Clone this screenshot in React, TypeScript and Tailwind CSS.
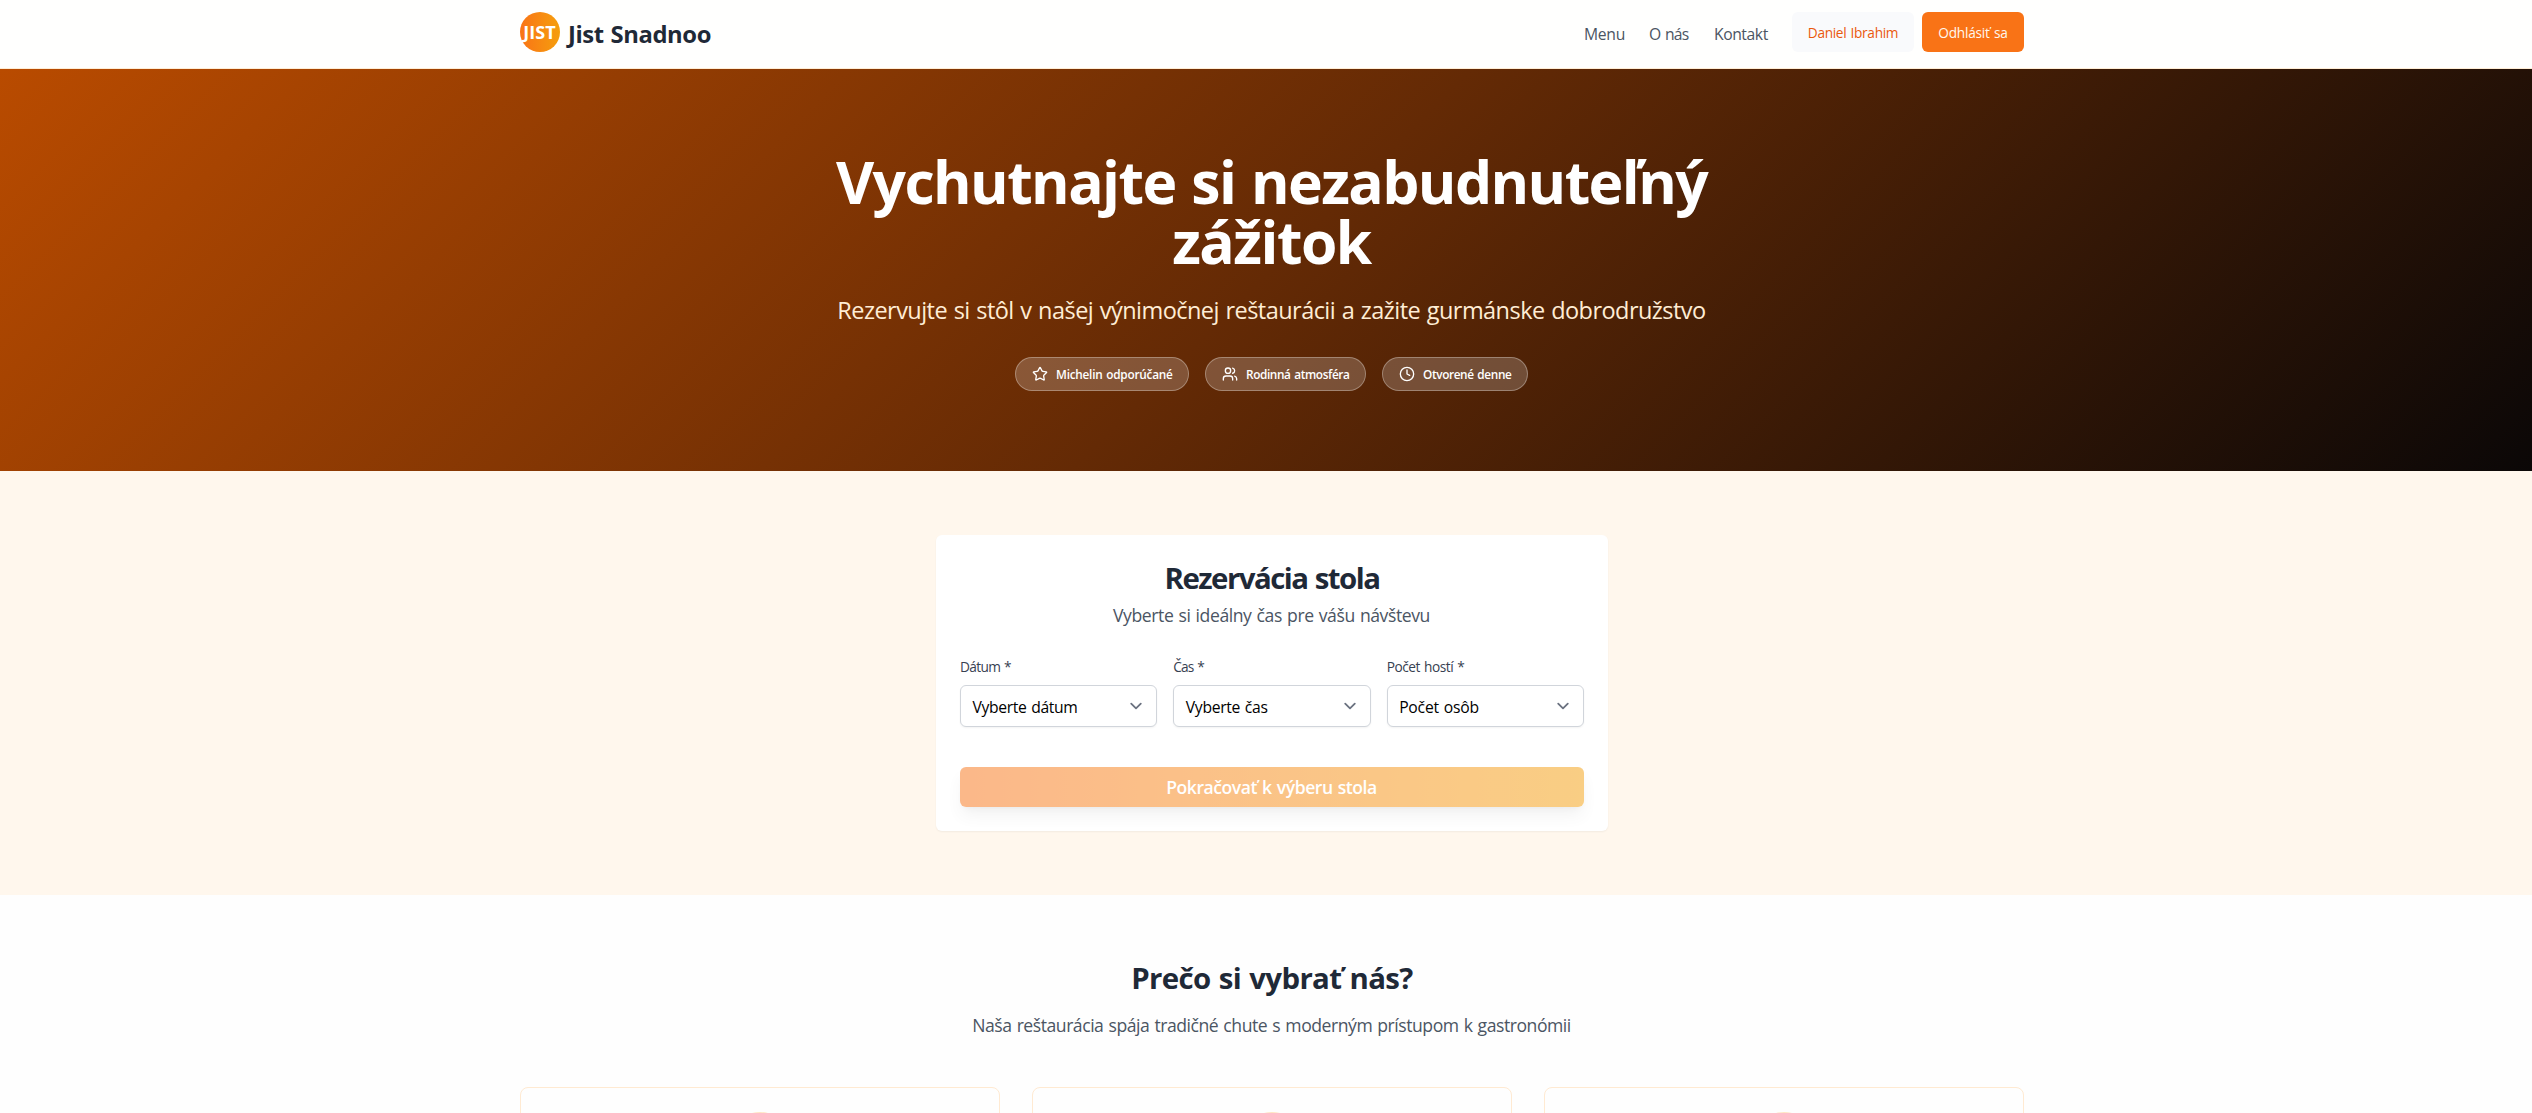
import React from 'react';
import { Star, Users, Clock } from 'lucide-react';

function Header() {
  return (
    <header className="h-[69px] border-b border-[#ffedd5] bg-[#fffffe]">
      <div className="mx-auto flex w-[1504px] items-center justify-between pt-3">
        <div className="flex items-center gap-2">
          <div className="flex h-10 w-10 items-center justify-center rounded-full bg-linear-to-r from-[#f97316] to-[#f59e0b]">
            <span className="pr-px text-[18px] leading-7 font-bold tracking-[0.1px] text-white">JIST</span>
          </div>
          <span className="pt-[3px] text-[23.8px] leading-8 font-bold tracking-[-0.4px] text-[#1f2937] [word-spacing:1px]">Jist Snadnoo</span>
        </div>
        <div className="flex items-center gap-6">
          <nav className="flex gap-6 pt-[3px] text-[15.7px] leading-6 text-[#4b5563]">
            <a className="w-[41px] tracking-[-0.29px]">Menu</a>
            <a className="w-[41px] tracking-[-0.69px] [word-spacing:1px]">O nás</a>
            <a className="w-[54px] tracking-[-0.43px]">Kontakt</a>
          </nav>
          <div className="flex gap-2">
            <button className="h-10 w-[122px] rounded-md bg-[#f9fafc] pt-0.5 text-[13.7px] tracking-[-0.33px] whitespace-nowrap text-[#ea580c] [word-spacing:1px]">
              Daniel Ibrahim
            </button>
            <button className="h-10 w-[102px] rounded-md bg-[#f97316] pt-0.5 text-[13.7px] tracking-[-0.24px] whitespace-nowrap text-[#fff7ed] [word-spacing:1px]">
              Odhlásiť sa
            </button>
          </div>
        </div>
      </div>
    </header>
  );
}

const chip =
  'flex h-[34px] items-center gap-2 rounded-full border border-white/30 bg-white/20 pl-4 text-[11.8px] leading-4 font-semibold whitespace-nowrap text-white [word-spacing:1px]';

function Hero() {
  return (
    <section className="flex h-[402px] flex-col items-center bg-[linear-gradient(135deg,#b94b00_0%,#642a05_50%,#0a0707_100%)] pt-[82px]">
      <h1 className="pr-px text-center text-[58.8px] leading-[60px] font-bold whitespace-nowrap text-white">
        <span className="block tracking-[-1.58px] [word-spacing:2px]">Vychutnajte si nezabudnuteľný</span>
        <span className="block tracking-[-1.5px]">zážitok</span>
      </h1>
      <p className="mt-[23px] pr-px text-[23.5px] leading-8 tracking-[-0.54px] whitespace-nowrap text-[#ffedd5] [word-spacing:1px]">
        Rezervujte si stôl v našej výnimočnej reštaurácii a zažite gurmánske dobrodružstvo
      </p>
      <div className="mt-[31px] flex gap-4 pr-px">
        <div className={`${chip} w-[174px] tracking-[-0.24px]`}>
          <Star className="h-4 w-4 shrink-0" />
          <span>Michelin odporúčané</span>
        </div>
        <div className={`${chip} w-[161px] tracking-[-0.38px]`}>
          <Users className="h-4 w-4 shrink-0" />
          <span>Rodinná atmosféra</span>
        </div>
        <div className={`${chip} w-[146px] tracking-[-0.37px]`}>
          <Clock className="h-4 w-4 shrink-0" />
          <span>Otvorené denne</span>
        </div>
      </div>
    </section>
  );
}

const labelClass = 'block text-[13.7px] leading-5 text-[#374151] [word-spacing:1px]';
const selectClass =
  'mt-2 flex h-[42px] items-center justify-between rounded-md border border-[#d1d5db] bg-white pr-2 pl-[11.5px] text-[15.7px] text-black shadow-xs [word-spacing:1px]';

function Chevron() {
  return (
    <svg viewBox="0 0 20 20" className="h-6 w-6" fill="none" stroke="#6b7280" strokeWidth="1.5" strokeLinecap="round" strokeLinejoin="round">
      <path d="M6 8l4 4 4-4" />
    </svg>
  );
}

function Reservation() {
  return (
    <section className="bg-[#fff7ed] py-16">
      <div className="mx-auto h-[296px] w-[672px] rounded-md bg-white p-6 shadow-xs">
        <h2 className="pt-px text-center text-[29.4px] leading-9 font-bold tracking-[-1.51px] text-[#1f2937] [word-spacing:1px]">Rezervácia stola</h2>
        <p className="mt-[5px] pr-px text-center text-[17.6px] leading-7 tracking-[-0.43px] text-[#4b5563] [word-spacing:1px]">
          Vyberte si ideálny čas pre vášu návštevu
        </p>
        <div className="mt-7 grid grid-cols-3 gap-4">
          <div>
            <label className={`${labelClass} tracking-[-0.66px]`}>Dátum *</label>
            <div className={`${selectClass} tracking-[-0.35px]`}>
              <span className="pt-1">Vyberte dátum</span>
              <Chevron />
            </div>
          </div>
          <div>
            <label className={`${labelClass} tracking-[-0.85px]`}>Čas *</label>
            <div className={`${selectClass} tracking-[-0.31px]`}>
              <span className="pt-1">Vyberte čas</span>
              <Chevron />
            </div>
          </div>
          <div>
            <label className={`${labelClass} tracking-[-0.47px]`}>Počet hostí *</label>
            <div className={`${selectClass} tracking-[-0.22px]`}>
              <span className="pt-1">Počet osôb</span>
              <Chevron />
            </div>
          </div>
        </div>
        <button className="mt-10 h-10 w-full rounded-md bg-linear-to-r from-[#f97316] to-[#f59e0b] pr-px text-[17.6px] leading-7 font-semibold tracking-[-0.47px] text-white opacity-50 shadow-lg [word-spacing:1px]">
          Pokračovať k výberu stola
        </button>
      </div>
    </section>
  );
}

function Features() {
  return (
    <section className="bg-[#fefefe] pt-[65px]">
      <h2 className="text-center text-[29.4px] leading-9 font-bold tracking-[-0.6px] text-[#1f2937] [word-spacing:1px]">Prečo si vybrať nás?</h2>
      <p className="mt-[15px] pr-px text-center text-[17.6px] leading-7 tracking-[-0.465px] text-[#4b5563] [word-spacing:1px]">
        Naša reštaurácia spája tradičné chute s moderným prístupom k gastronómii
      </p>
      <div className="mx-auto mt-12 grid w-[1504px] grid-cols-3 gap-8">
        {[0, 1, 2].map((i) => (
          <div key={i} className="h-[220px] rounded-lg border border-[#ffead2] pt-6">
            <div className="mx-auto h-16 w-16 rounded-full bg-[#ffe6c4]" />
          </div>
        ))}
      </div>
    </section>
  );
}

export default function App() {
  return (
    <div className="h-[1113px] w-full overflow-hidden bg-[#fefefe]">
      <div className="w-[2544px] font-['Open_Sans','Noto_Sans',sans-serif]">
        <Header />
        <Hero />
        <Reservation />
        <Features />
      </div>
    </div>
  );
}
